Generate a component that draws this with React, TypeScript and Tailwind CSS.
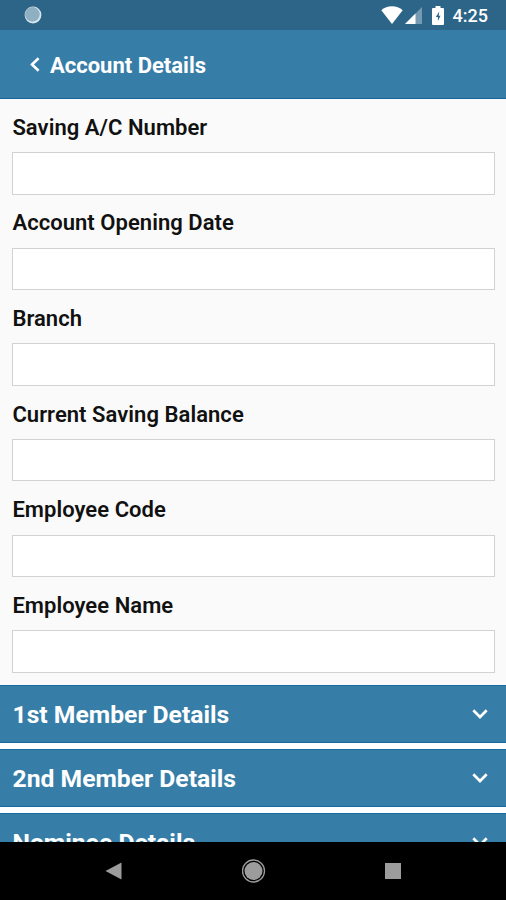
const FIELDS = [
    "Saving A/C Number",
    "Account Opening Date",
    "Branch",
    "Current Saving Balance",
    "Employee Code",
    "Employee Name",
]

const SECTIONS = ["1st Member Details", "2nd Member Details", "Nominee Details"]

const StatusBar = () => (
    <div className="flex h-[30px] shrink-0 items-center bg-[#2c6587] pl-6 pr-[18px] text-white">
        <svg className="size-[18px]" viewBox="0 0 18 18">
            <circle cx="9" cy="9" r="8.400" fill="#d9e6ed"/>
            <circle cx="8.400" cy="8.400" r="7.300" fill="#8fb0c2"/>
        </svg>
        <svg className="ml-auto h-[18px] w-[22px]" viewBox="0 0 22 18" fill="currentColor">
            <path d="M11 18 .3 4.3C3 1.800 7 .3 11 .3s8 1.500 10.700 4z"/>
        </svg>
        <svg className="ml-[2px] size-[17px]" viewBox="0 0 17 17" fill="currentColor">
            <path d="M17 0v17H0z" opacity=".35"/>
            <path d="M10.500 6.500V17H0z"/>
        </svg>
        <svg className="ml-[10px] h-[19px] w-[12px]" viewBox="0 0 12 19">
            <path d="M3.500 0h5v2H11q1 0 1 1v15q0 1-1 1H1q-1 0-1-1V3q0-1 1-1h2.500z" fill="currentColor"/>
            <path d="M7.300 5.500 3.800 11h2.100v4L8.500 9.700H6.700z" fill="#2c6587"/>
        </svg>
        <span className="ml-[9px] pt-[2px] text-[18px] leading-[18px] font-medium">4:25</span>
    </div>
)

const Field = ({label}: { label: string }) => (
    <label className="flex h-[95.6px] shrink-0 flex-col">
        <span className="h-[53.500px] pt-[15.800px] text-[22px] leading-[26px] font-semibold tracking-[0.05px]">{label}</span>
        <input className="h-[42.500px] w-full border border-[#d2d2d2] bg-white px-3 outline-none"/>
    </label>
)

const Section = ({title}: { title: string }) => (
    <button className="flex h-[58px] shrink-0 items-center justify-between border-y border-[#166c9c] bg-[#367ea8] pl-[12.500px] pr-[18px] text-white">
        <span className="pt-[2px] text-[24.700px] leading-[30px] font-bold">{title}</span>
        <svg className="h-[10px] w-4" viewBox="0 0 16 10" fill="none" stroke="currentColor" strokeWidth="2.700">
            <path d="m1.300 1.300 6.700 6.700 6.700-6.700"/>
        </svg>
    </button>
)

const NavBar = () => (
    <div className="flex h-[58px] shrink-0 items-center bg-black pl-[105px] pr-[105px] text-[#9c9c9c]">
        <svg className="h-[18px] w-[17px]" viewBox="0 0 17 18" fill="currentColor">
            <path d="M16.500.5v17L.5 9z"/>
        </svg>
        <svg className="mx-auto size-6" viewBox="0 0 24 24" fill="currentColor">
            <circle cx="11.500" cy="12" r="9"/>
            <circle cx="11.500" cy="12" r="11" fill="none" stroke="currentColor" strokeWidth="1.300"/>
        </svg>
        <div className="size-4 bg-[#9c9c9c]"/>
    </div>
)

export default () => {
    return (
        <div className="flex h-[900px] w-[506px] flex-col overflow-hidden bg-[#fafafa] font-[Roboto,sans-serif] text-[#111]">
            <StatusBar/>
            <header className="flex h-[69px] shrink-0 items-center border-b border-[#166499] bg-[#367ea8] pl-[30px] pt-[3px] text-white">
                <svg className="-mt-[2px] h-[15px] w-[10px]" viewBox="0 0 10 15" fill="none" stroke="currentColor" strokeWidth="2.600">
                    <path d="M8.600 1.200 2 7.500l6.600 6.300"/>
                </svg>
                <h1 className="ml-[10px] text-[22px] leading-[26px] font-bold">Account Details</h1>
            </header>
            <main className="flex min-h-0 flex-1 flex-col overflow-hidden">
                <div className="flex shrink-0 flex-col pl-[12.400px] pr-[11px] pb-[12px]">
                    {FIELDS.map((label) => <Field key={label} label={label}/>)}
                </div>
                <div className="flex shrink-0 flex-col gap-[6px] bg-white">
                    {SECTIONS.map((title) => <Section key={title} title={title}/>)}
                </div>
            </main>
            <NavBar/>
        </div>
    )
}
